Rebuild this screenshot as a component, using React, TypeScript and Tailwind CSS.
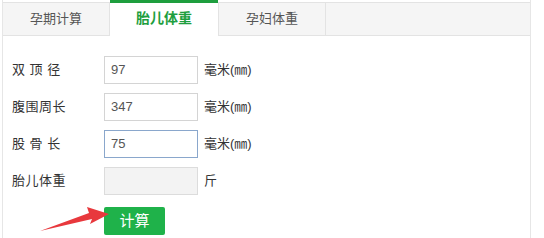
import React from "react";

const font = { fontFamily: '"Liberation Sans", "Noto Sans CJK SC", sans-serif' };

function Row({ label, value, unit, focus, disabled }: { label: string; value: string; unit: string; focus?: boolean; disabled?: boolean }) {
  return (
    <div className="flex items-center h-[28px]">
      <div className="w-[101px] pl-[9px] text-[13px] text-[#333] whitespace-pre tracking-[0.5px]">{label}</div>
      <div
        className={
          "w-[94px] h-[28px] flex items-center px-[6px] text-[13px] text-[#555] border " +
          (focus ? "border-[#8aa7cc] bg-white" : disabled ? "border-[#dcdcdc] bg-[#f3f3f3]" : "border-[#d4d4d4] bg-white")
        }
      >
        {value}
      </div>
      <div className="ml-[6px] text-[13px] text-[#333]">{unit}</div>
    </div>
  );
}

export default function App() {
  return (
    <div className="w-[544px] h-[238px] bg-white overflow-hidden relative" style={font}>
      <div className="ml-[2px] w-[529px] h-[260px] border-l border-r border-[#e6e6e6]">
        <div className="flex h-[36px]">
          <div className="w-[107px] mt-[2px] h-[34px] flex items-center justify-center bg-[#f5f5f5] border-t border-b border-r border-[#e3e3e3] text-[13px] text-[#555]">
            孕期计算
          </div>
          <div className="w-[108px] h-[36px] flex items-center justify-center bg-white border-t-[3px] border-[#1e9e3e] text-[14px] font-bold text-[#1e9e3e] pb-[2px]">
            胎儿体重
          </div>
          <div className="w-[108px] mt-[2px] h-[34px] flex items-center justify-center bg-[#f5f5f5] border-t border-b border-l border-r border-[#e3e3e3] text-[13px] text-[#555]">
            孕妇体重
          </div>
          <div className="flex-1 mt-[2px] h-[34px] bg-[#f5f5f5] border-t border-b border-[#e3e3e3]" />
        </div>
        <div className="pt-[20px] flex flex-col gap-[9px]">
          <Row label="双 顶 径" value="97" unit="毫米(㎜)" />
          <Row label="腹围周长" value="347" unit="毫米(㎜)" />
          <Row label="股 骨 长" value="75" unit="毫米(㎜)" focus />
          <Row label="胎儿体重" value="" unit="斤" disabled />
        </div>
        <div className="mt-[12px] ml-[101px]">
          <button className="w-[61px] h-[28px] bg-[#1fb24a] text-white text-[15px] font-normal rounded-[2px] flex items-center justify-center">
            计算
          </button>
        </div>
      </div>
      <svg className="absolute left-0 top-0" width="544" height="238" viewBox="0 0 544 238">
        <path d="M40 231 L92 219 L90 224 L109 214 L87 207 L89 213 Z" fill="#e8383d" />
      </svg>
    </div>
  );
}
